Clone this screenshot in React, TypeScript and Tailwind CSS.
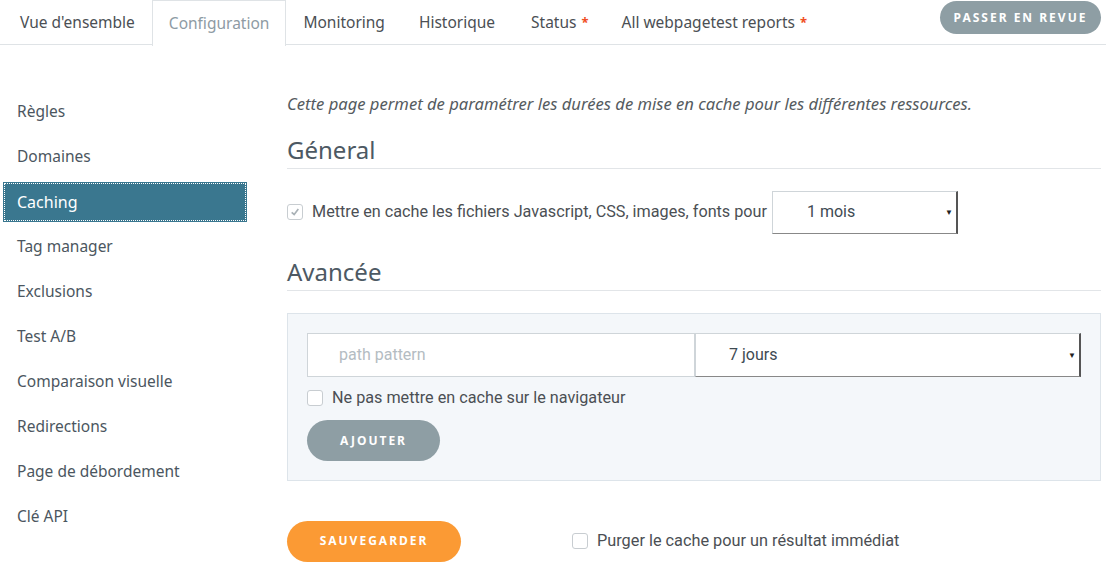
import React from "react";

const tabs = [
  { label: "Vue d'ensemble" },
  { label: "Configuration", active: true },
  { label: "Monitoring" },
  { label: "Historique" },
  { label: "Status", star: true },
  { label: "All webpagetest reports", star: true },
];

const menu = [
  "Règles",
  "Domaines",
  "Caching",
  "Tag manager",
  "Exclusions",
  "Test A/B",
  "Comparaison visuelle",
  "Redirections",
  "Page de débordement",
  "Clé API",
];

function Star() {
  return <span className="ml-[5px] text-[13px] font-bold text-[#f04e23]">*</span>;
}

function Box({ checked }: { checked?: boolean }) {
  return (
    <span className="flex h-[16px] w-[16px] shrink-0 items-center justify-center rounded-[3px] border border-[#c8cdd1] bg-white">
      {checked && (
        <svg viewBox="0 0 12 12" className="h-[10px] w-[10px]">
          <path d="M2 6.5 L5 9 L10 2.5" fill="none" stroke="#a9b1b6" strokeWidth="2" />
        </svg>
      )}
    </span>
  );
}

function Select({ value, className }: { value: string; className: string }) {
  return (
    <div
      className={`flex items-center justify-between border border-[#cfd5d9] border-r-[2px] border-r-[#555] border-b-[#888] bg-white pr-[3px] ${className}`}
    >
      <span className="text-[16px] text-[#3e4a52]" style={{ fontFamily: "Roboto, sans-serif" }}>
        {value}
      </span>
      <span className="text-[8px] text-[#222]">▼</span>
    </div>
  );
}

export default function App() {
  return (
    <div className="h-[566px] w-[1106px] overflow-hidden bg-white text-[#4b4f54]" style={{ fontFamily: "'Noto Sans', sans-serif" }}>
      <div className="flex h-[45px] items-start border-b border-[#dfe3e6]">
        <div className="flex h-[45px] items-stretch pl-[3px]">
          {tabs.map((t) => (
            <div
              key={t.label}
              className={`flex items-center px-[15px] pt-[1px] text-[15.5px] ${
                t.active
                  ? "-mb-px border border-b-0 border-[#dfe3e6] bg-white px-[16px] text-[#8e9ba4]"
                  : "mx-[2px] text-[#4b4f54]"
              } ${t.label === "All webpagetest reports" ? "ml-[1px]" : ""} ${t.label === "Status" ? "ml-[4px]" : ""}`}
            >
              {t.label}
              {t.star && <Star />}
            </div>
          ))}
        </div>
        <div className="ml-auto mr-[5px] mt-[1px] flex h-[33px] w-[161px] items-center justify-center rounded-full bg-[#8e9ea4] text-[12px] font-bold tracking-[2px] text-white">
          PASSER EN REVUE
        </div>
      </div>

      <div className="flex">
        <div className="w-[247px] shrink-0 pl-[3px] pt-[47px]">
          {menu.map((m) => (
            <div
              key={m}
              className={`flex h-[40px] items-center pl-[14px] text-[15.5px] mb-[5px] ${
                m === "Caching"
                  ? "bg-[#3a778f] text-[16px] text-white outline-1 outline-dotted outline-offset-[-2px] outline-white"
                  : "text-[#4b5660]"
              }`}
            >
              {m}
            </div>
          ))}
        </div>

        <div className="ml-[40px] mr-[5px] flex-1 pt-[47px]">
          <p className="text-[16.6px] italic text-[#555b60]">
            Cette page permet de paramétrer les durées de mise en cache pour les différentes ressources.
          </p>

          <h2 className="mt-[17px] border-b border-[#e2e5e8] pb-[2px] text-[24px] leading-[32px] text-[#4d5963]">Géneral</h2>

          <div className="mt-[22px] flex items-center">
            <Box checked />
            <span className="ml-[9px] mr-[5px] text-[16.2px] text-[#4b4f54]" style={{ fontFamily: "Roboto, sans-serif" }}>
              Mettre en cache les fichiers Javascript, CSS, images, fonts pour
            </span>
            <Select value="1 mois" className="h-[43px] w-[186px] pl-[34px]" />
          </div>

          <h2 className="mt-[22px] border-b border-[#e2e5e8] pb-[2px] text-[24px] leading-[32px] text-[#4d5963]">Avancée</h2>

          <div className="mt-[22px] h-[168px] border border-[#dde4ea] bg-[#f4f7fa] px-[19px] pt-[19px]">
            <div className="flex h-[44px]">
              <div
                className="flex w-[388px] items-center border border-[#cfd5d9] bg-white pl-[31px] text-[16px] text-[#b4bcc2]"
                style={{ fontFamily: "Roboto, sans-serif" }}
              >
                path pattern
              </div>
              <Select value="7 jours" className="flex-1 pl-[33px]" />
            </div>
            <div className="mt-[9px] flex items-center">
              <Box />
              <span className="ml-[9px] text-[16.2px] text-[#4b4f54]" style={{ fontFamily: "Roboto, sans-serif" }}>
                Ne pas mettre en cache sur le navigateur
              </span>
            </div>
            <div className="mt-[10px] flex h-[41px] w-[133px] items-center justify-center rounded-full bg-[#8e9ea4] text-[12px] font-bold tracking-[2px] text-white">
              AJOUTER
            </div>
          </div>

          <div className="mt-[40px] flex items-center">
            <div className="flex h-[41px] w-[174px] items-center justify-center rounded-full bg-[#fb9a34] text-[12px] font-bold tracking-[2px] text-white">
              SAUVEGARDER
            </div>
            <div className="ml-[111px] flex items-center">
              <Box />
              <span className="ml-[9px] text-[16.3px] text-[#4b4f54]" style={{ fontFamily: "Roboto, sans-serif" }}>
                Purger le cache pour un résultat immédiat
              </span>
            </div>
          </div>
        </div>
      </div>
    </div>
  );
}
